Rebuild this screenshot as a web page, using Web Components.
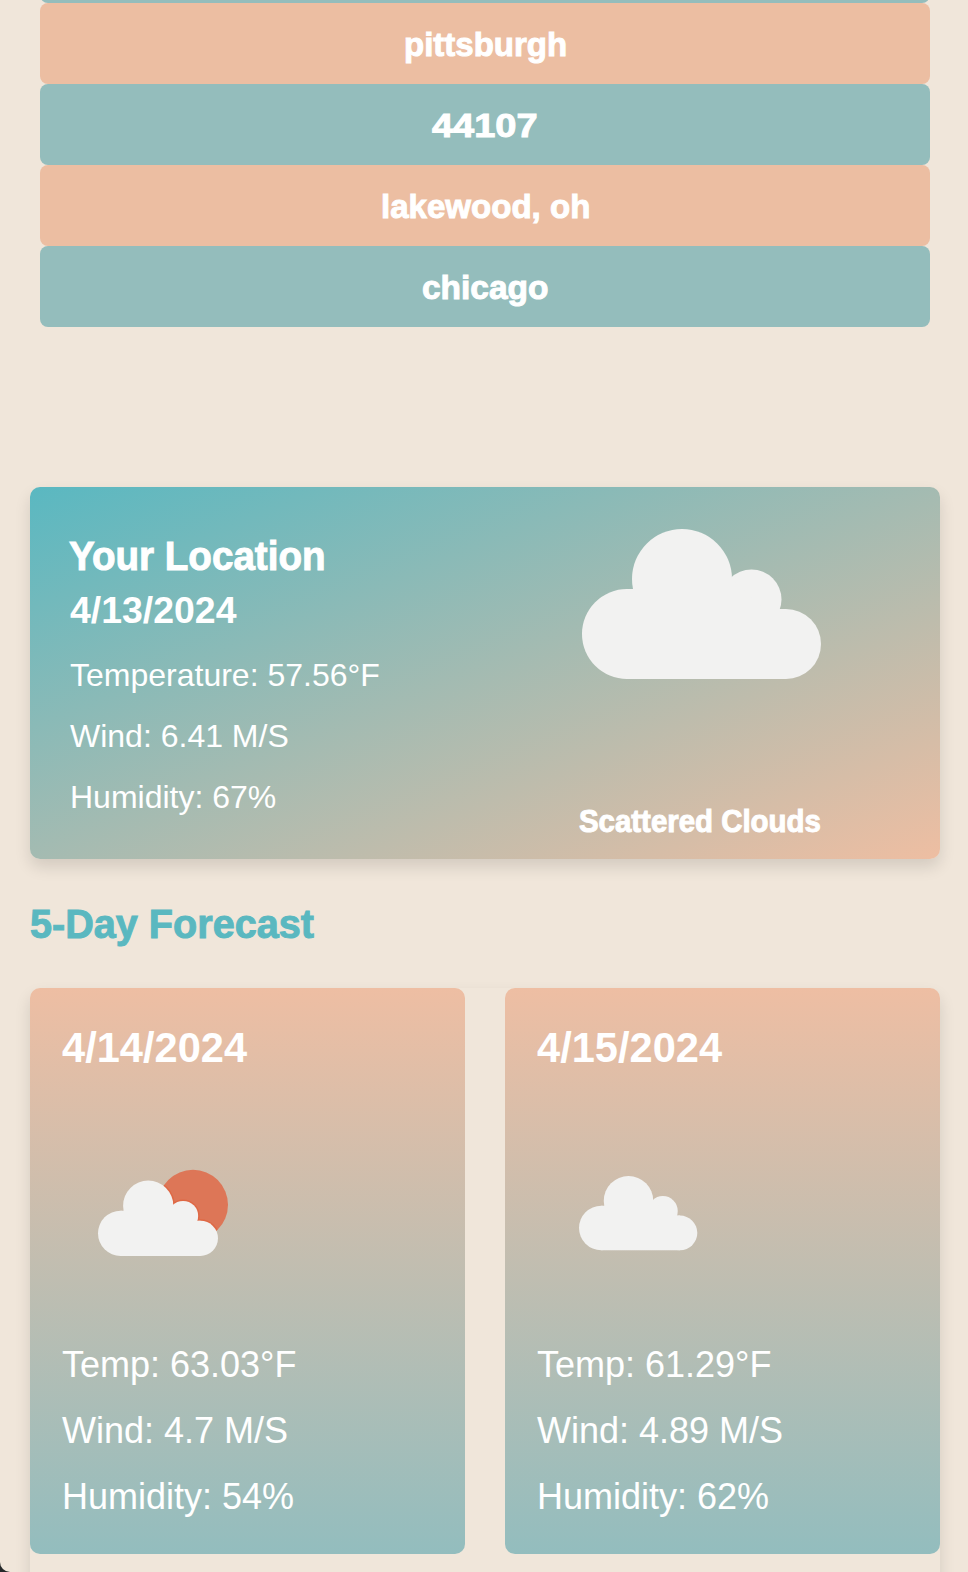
<!DOCTYPE html>
<html lang="en">
<head>
<meta charset="utf-8">
<title>Weather Dashboard</title>
<style>
html{background:#25282a}
body{margin:0;height:1572px;overflow:hidden;background:#25282a;font-family:"Liberation Sans",Arial,sans-serif}
</style>
</head>
<body>
<weather-app></weather-app>
<script>
const define=(name,html,setup)=>customElements.define(name,class extends HTMLElement{
  connectedCallback(){
    if(this.shadowRoot)return;
    const t=document.createElement('template');
    t.innerHTML=html;
    this.attachShadow({mode:'open'}).append(t.content.cloneNode(true));
    if(setup)setup(this,this.shadowRoot);
  }
});

// Heavy display lettering set to a given width.
define('display-text',`<style>
:host{display:block;font-family:"Liberation Sans",Arial,sans-serif;font-weight:700;white-space:nowrap}
span{display:inline-block;transform-origin:0 50%;-webkit-text-stroke:1px currentColor}
</style><span><slot></slot></span>`,(el,root)=>{
  const w=+el.getAttribute('width'),s=root.querySelector('span');
  const natural=s.offsetWidth;
  el.style.width=w+'px';
  s.style.transform='scaleX('+w/natural+')';
});

define('history-item',`<style>
:host{display:flex;justify-content:center;align-items:center;box-sizing:border-box;height:81px;border-radius:8px;background:#94bdbc;color:#fff;font-size:34px;line-height:44px}
:host([tone=peach]){background:#ecbea2}
</style><slot></slot>`);

define('weather-icon',`<style>
:host{display:block}svg{display:block;width:100%;height:100%}
circle,path{fill:#f2f2f1}.sun{fill:#dd7657}.rim circle{fill:none;stroke:#df6844;stroke-width:6}
</style><svg></svg>`,(el,root)=>{
  const shape='<circle cx="45" cy="105" r="45"/><circle cx="100" cy="50" r="50"/><circle cx="169.5" cy="70.5" r="30"/><circle cx="204" cy="115" r="35"/><path d="M45 150V60H100V50H150L182 80H204V150Z"/>';
  const svg=root.querySelector('svg'),kind=el.getAttribute('kind');
  if(kind==='large'){svg.setAttribute('viewBox','0 0 239 150');svg.innerHTML=shape;return}
  svg.setAttribute('viewBox','0 0 200 260');
  svg.innerHTML=kind==='sun'
    ?'<defs><clipPath id="disc"><circle cx="131" cy="132.8" r="35"/></clipPath></defs><circle class="sun" cx="131" cy="132.8" r="35"/><g clip-path="url(#disc)"><g class="rim" transform="translate(36 108.6) scale(.502)"><circle cx="100" cy="50" r="50"/><circle cx="169.5" cy="70.5" r="30"/><circle cx="204" cy="115" r="35"/></g></g><g transform="translate(36 108.6) scale(.502)">'+shape+'</g>'
    :'<g transform="translate(42 104) scale(.495)">'+shape+'</g>';
});

define('current-weather',`<style>
:host{display:grid;grid-template-columns:430px 480px;height:372px;border-radius:10px;color:#fff;background:linear-gradient(to bottom right,#5ab8c1,#eebea2);box-shadow:0 8px 16px rgba(0,0,0,.12)}
.info{padding:45px 0 0 40px}
.title{font-size:41px;line-height:48px;margin-left:-1px}
.date{margin:8px 0 12.5px;font-size:37.44px;font-weight:700;line-height:44px}
.stats{font-size:32px;line-height:61px}
.sky{display:flex;flex-direction:column;align-items:center;padding:42px 0 0 2px}
weather-icon{width:239px;height:150px}
.caption{margin:122px 2px 0 0;font-size:30.5px;line-height:40px}
</style>
<div class="info"><display-text class="title" width="257">Your Location</display-text>
<div class="date"><slot name="date"></slot></div><div class="stats"><slot></slot></div></div>
<div class="sky"><weather-icon kind="large"></weather-icon><display-text class="caption" width="242">Scattered Clouds</display-text></div>`);

define('forecast-card',`<style>
:host{display:block;box-sizing:border-box;height:566px;padding:36px 32px 0;border-radius:10px;color:#fff;background:linear-gradient(#eebea3,#93bdbe)}
.date{font-size:41.6px;font-weight:700;line-height:48px}
.stats{font-size:36px;line-height:66px}
::slotted(weather-icon){width:200px;height:260px}
</style><div class="date"><slot name="date"></slot></div><slot name="icon"></slot><div class="stats"><slot></slot></div>`);

define('weather-app',`<style>
:host{display:block;box-sizing:border-box;width:970px;height:1572px;padding:0 30px;overflow:hidden;background:#f0e6da;border-bottom-left-radius:10px}
.history{margin:-78px 10px 160px}
.heading{margin:40px 0 39px;color:#5ab8c0;font-size:41px;line-height:50px}
.forecast{display:grid;grid-template-columns:1fr 1fr;gap:40px;align-content:start;height:1100px;border-radius:10px;box-shadow:0 8px 16px rgba(0,0,0,.12);background:#f0e6da}
</style>
<div class="history">
<history-item></history-item>
<history-item tone="peach"><display-text width="163">pittsburgh</display-text></history-item>
<history-item><display-text width="106">44107</display-text></history-item>
<history-item tone="peach"><display-text width="209">lakewood, oh</display-text></history-item>
<history-item><display-text width="126">chicago</display-text></history-item>
</div>
<current-weather><span slot="date">4/13/2024</span><div>Temperature: 57.56°F</div><div>Wind: 6.41 M/S</div><div>Humidity: 67%</div></current-weather>
<display-text class="heading" width="284">5-Day Forecast</display-text>
<div class="forecast">
<forecast-card><span slot="date">4/14/2024</span><weather-icon slot="icon" kind="sun"></weather-icon><div>Temp: 63.03°F</div><div>Wind: 4.7 M/S</div><div>Humidity: 54%</div></forecast-card>
<forecast-card><span slot="date">4/15/2024</span><weather-icon slot="icon" kind="cloud"></weather-icon><div>Temp: 61.29°F</div><div>Wind: 4.89 M/S</div><div>Humidity: 62%</div></forecast-card>
</div>`);
</script>
</body>
</html>
